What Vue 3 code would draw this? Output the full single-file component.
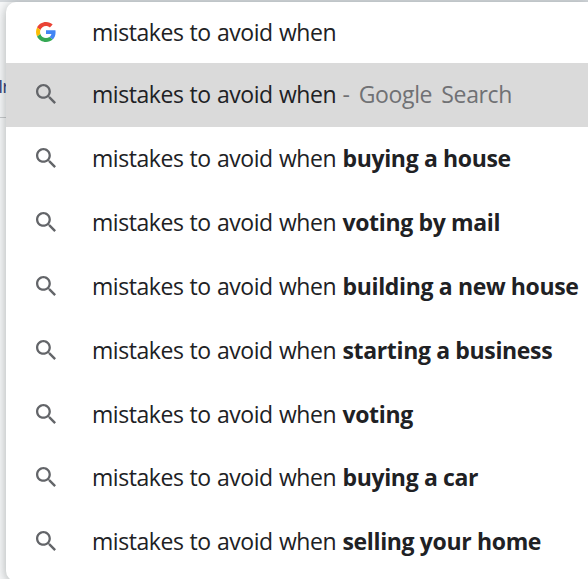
<template>
  <div class="page">
    <div class="page__edge">
      <span class="page__text">Ir</span>
    </div>

    <div class="omnibox">
      <!-- Search input -->
      <div class="row row--input">
        <svg class="row__icon row__icon--google" viewBox="0 0 48 48">
          <path fill="#EA4335" d="M24 9.5c3.54 0 6.71 1.22 9.21 3.6l6.85-6.85C35.9 2.38 30.47 0 24 0 14.62 0 6.51 5.38 2.56 13.22l7.98 6.19C12.43 13.72 17.74 9.5 24 9.5z" />
          <path fill="#4285F4" d="M46.98 24.55c0-1.57-.15-3.09-.38-4.55H24v9.02h12.94c-.58 2.96-2.26 5.48-4.78 7.18l7.73 6c4.51-4.18 7.09-10.36 7.09-17.65z" />
          <path fill="#FBBC05" d="M10.53 28.59c-.48-1.45-.76-2.99-.76-4.59s.27-3.14.76-4.59l-7.98-6.19C.92 16.46 0 20.12 0 24c0 3.88.92 7.54 2.56 10.78l7.97-6.19z" />
          <path fill="#34A853" d="M24 48c6.48 0 11.93-2.13 15.89-5.81l-7.73-6c-2.15 1.45-4.92 2.3-8.16 2.3-6.26 0-11.57-4.22-13.47-9.91l-7.98 6.19C6.51 42.62 14.62 48 24 48z" />
        </svg>
        <span class="row__query">{{ query }}</span>
      </div>

      <!-- Suggestions -->
      <div
        v-for="(item, index) in suggestions"
        :key="index"
        :class="['row', { 'row--active': item.hint }]"
      >
        <svg class="row__icon" viewBox="3 3 17.49 17.49">
          <path fill="#636569" d="M15.5 14h-.79l-.28-.27C15.41 12.59 16 11.11 16 9.5 16 5.91 13.09 3 9.5 3S3 5.91 3 9.5 5.91 16 9.5 16c1.61 0 3.09-.59 4.23-1.57l.27.28v.79l5 4.99L20.49 19l-4.99-5zm-6 0C7.01 14 5 11.99 5 9.5S7.01 5 9.5 5 14 7.01 14 9.5 11.99 14 9.5 14z" />
        </svg>
        <span class="row__query">{{ query }}</span>
        <span v-if="item.hint" class="row__hint">{{ item.hint }}</span>
        <b v-else class="row__completion">{{ item.completion }}</b>
      </div>
    </div>
  </div>
</template>

<script setup>
const query = 'mistakes to avoid when'

const suggestions = [
  { hint: '- Google Search' },
  { completion: 'buying a house' },
  { completion: 'voting by mail' },
  { completion: 'building a new house' },
  { completion: 'starting a business' },
  { completion: 'voting' },
  { completion: 'buying a car' },
  { completion: 'selling your home' }
]
</script>

<style>
body {
  margin: 0;
}
</style>

<style scoped>
.page {
  display: flex;
  box-sizing: border-box;
  width: 588px;
  height: 579px;
  padding-top: 2px;
  overflow: hidden;
  background: linear-gradient(#d6dade 2px, #f8f9fa 2px);
  font-family: 'Open Sans', 'Noto Sans', sans-serif;
}

.page__edge {
  flex-shrink: 0;
  box-sizing: border-box;
  width: 6px;
  height: 116px;
  padding-top: 71px;
  border-bottom: 1px solid #c8cacc;
}

.page__text {
  display: block;
  margin-left: -2px;
  font-size: 19px;
  line-height: 26px;
  letter-spacing: -1px;
  color: #33407a;
}

.omnibox {
  position: relative;
  flex: 1;
  height: 579px;
  overflow: hidden;
  border-radius: 10px 0 0 10px;
  background: #fff;
  box-shadow: 0 2px 12px rgba(50, 60, 60, 0.4);
}

.row {
  display: flex;
  align-items: center;
  box-sizing: border-box;
  height: 63.8px;
  padding-left: 30px;
  font-size: 23px;
  letter-spacing: -0.35px;
  white-space: nowrap;
  color: #202124;
}

.row--input {
  height: 61px;
  padding-bottom: 1px;
}

.row--active {
  height: 63.5px;
  padding-bottom: 1px;
  background: #dadada;
}

.row__icon {
  flex-shrink: 0;
  width: 20px;
  height: 20px;
  margin-right: 36px;
}

.row__query {
  flex-shrink: 0;
  width: 250.5px;
  letter-spacing: -0.45px;
  word-spacing: 0.7px;
}

.row__hint {
  letter-spacing: -0.35px;
  word-spacing: 3.5px;
  color: #707174;
}

.row__completion {
  font-weight: 700;
}
</style>
